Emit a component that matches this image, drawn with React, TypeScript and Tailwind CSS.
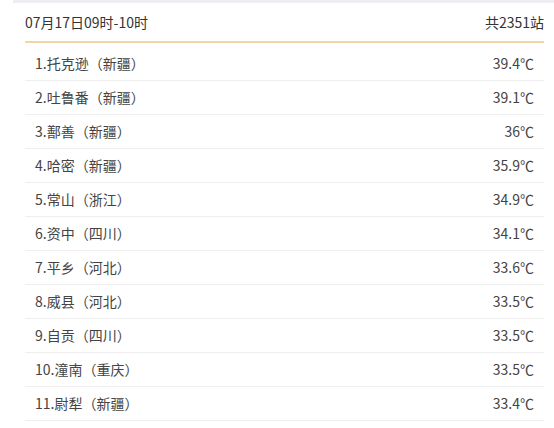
const rows = [
  ['1.托克逊（新疆）', '39.4℃'],
  ['2.吐鲁番（新疆）', '39.1℃'],
  ['3.鄯善（新疆）', '36℃'],
  ['4.哈密（新疆）', '35.9℃'],
  ['5.常山（浙江）', '34.9℃'],
  ['6.资中（四川）', '34.1℃'],
  ['7.平乡（河北）', '33.6℃'],
  ['8.威县（河北）', '33.5℃'],
  ['9.自贡（四川）', '33.5℃'],
  ['10.潼南（重庆）', '33.5℃'],
  ['11.尉犁（新疆）', '33.4℃'],
];

export default function App() {
  return (
    <div className="h-[428px] w-[554px] overflow-hidden bg-white font-['Noto_Sans_CJK_SC','Noto_Sans',sans-serif] text-[14px]">
      <div className="ml-[13px] h-[3px] bg-[#eeeef2]" />
      <div className="ml-[25px] mr-[10px]">
        <div className="flex h-[40px] items-center justify-between border-b-2 border-[#f3d5a3] text-[#333]">
          <span>07月17日09时-10时</span>
          <span>共2351站</span>
        </div>
        <div className="mt-[4px]">
          {rows.map(([name, temp]) => (
            <div
              key={name}
              className="flex h-[34px] items-center justify-between border-b border-[#eeeeee] px-[10px] text-[#444]"
            >
              <span>{name}</span>
              <span>{temp}</span>
            </div>
          ))}
        </div>
      </div>
    </div>
  );
}
